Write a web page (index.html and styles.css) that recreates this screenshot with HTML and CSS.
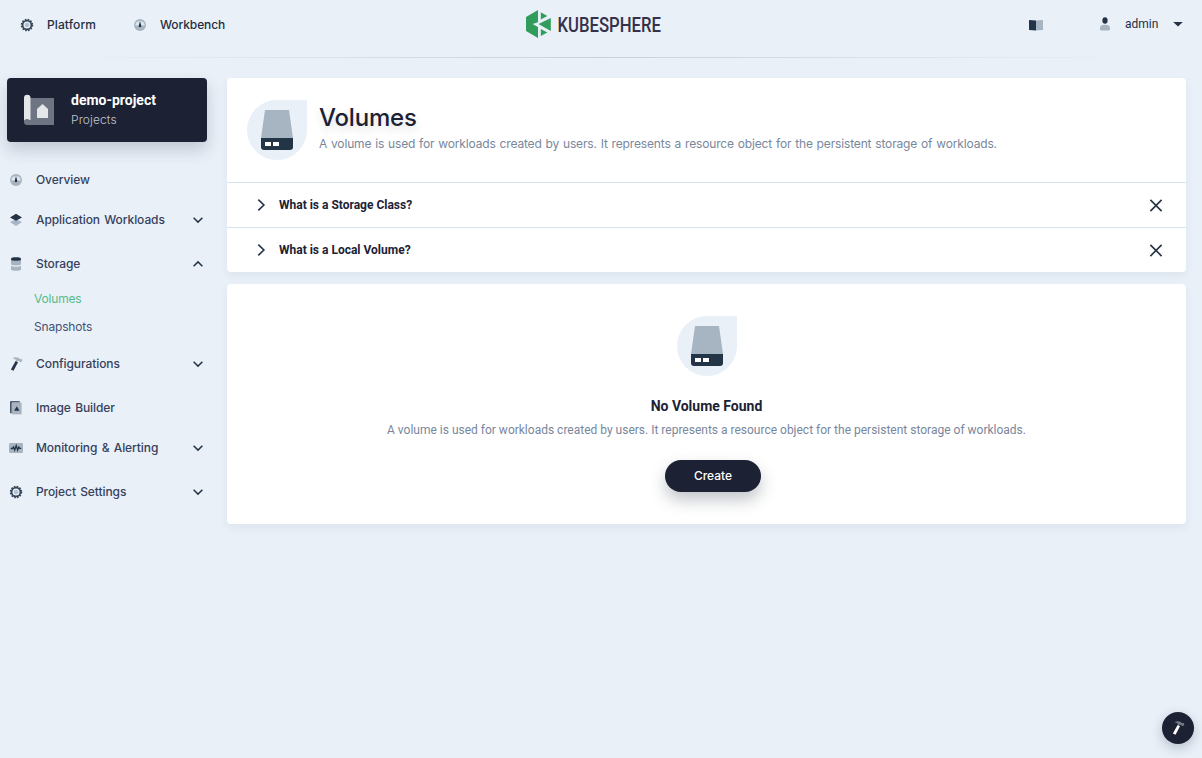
FILE: index.html
```html
<!DOCTYPE html>
<html lang="en">
<head>
<meta charset="utf-8">
<title>Volumes - KubeSphere</title>
<link rel="stylesheet" href="styles.css">
</head>
<body>
<svg class="defs" width="0" height="0">
  <symbol id="gear" viewBox="0 0 16 16"><circle cx="8" cy="8" r="4.400" fill="none" stroke="#324558" stroke-width="1.700"/><circle cx="8" cy="8" r="5.500" fill="none" stroke="#324558" stroke-width="1.500" stroke-dasharray="1.640 1.240"/><circle cx="8" cy="8" r="2.300" fill="#b6c2cd"/></symbol>
  <symbol id="gauge" viewBox="0 0 16 16"><circle cx="8" cy="8" r="6" fill="#a7b4c1"/><path d="M3.300 8.600a4.700 4.700 0 0 1 9.400 0z" fill="#dde5ed"/><path d="M8 4l1.200 4.400a1.300 1.300 0 1 1-2.400 0z" fill="#243447"/></symbol>
  <symbol id="layers" viewBox="0 0 16 16"><path d="M8 7.300l6 2.800-6 3.900-6-3.900z" fill="#a7b4c1"/><path d="M8 1.800l6 3.700-6 3.300-6-3.300z" fill="#243447"/></symbol>
  <symbol id="database" viewBox="0 0 16 16"><path d="M3 4v4.200c0 1.600 10 1.600 10 0V4z" fill="#a7b4c1"/><path d="M3 9.800v3.600c0 1.800 10 1.800 10 0V9.800c-2 1.300-8 1.300-10 0z" fill="#a7b4c1"/><path d="M3 2.400C3 .800 13 .800 13 2.400v1.300c0 1.300-10 1.300-10 0z" fill="#243447"/></symbol>
  <symbol id="hammer" viewBox="0 0 16 16"><path class="head" d="M4.300 2.300C7.500.600 10.600 1.400 12 3.200l2-.300.300 2.400-2 1-1.400-1.500-2.400.600-1.500-2.300z"/><path class="shaft" d="M7.600 5.100l2.400 1.100-4.500 8.500-2.600-1.300z"/></symbol>
  <symbol id="image" viewBox="0 0 16 16"><path d="M2.200 13.200V1.200h9.600v1.300H3.600v10.700z" fill="#243447"/><path d="M4 2.600h9.600v11.800H4z" fill="#a7b4c1"/><path d="M8.800 6.200l2.700 4.500H6.100z" fill="#243447"/></symbol>
  <symbol id="monitor" viewBox="0 0 16 16"><rect x="1" y="3" width="14" height="10" rx="1.200" fill="#a7b4c1"/><path d="M2.700 8.500h1.800l1-1.500 1.200 3 1.500-4.500 1.400 4.500L10.800 7l.900 1.300h1.500" fill="none" stroke="#243447" stroke-width="1.300"/></symbol>
  <symbol id="down" viewBox="0 0 16 16"><path d="M3.600 5.700L8 10.100l4.400-4.400" fill="none" stroke="#243447" stroke-width="1.500"/></symbol>
  <symbol id="up" viewBox="0 0 16 16"><path d="M3.600 10.300L8 5.900l4.400 4.400" fill="none" stroke="#243447" stroke-width="1.500"/></symbol>
  <symbol id="right" viewBox="0 0 16 16"><path d="M5.300 2.600L10.900 8l-5.600 5.400" fill="none" stroke="#243447" stroke-width="1.600"/></symbol>
  <symbol id="close" viewBox="0 0 16 16"><path d="M2.400 2.900l11.200 11.200M13.600 2.900L2.400 14.100" stroke="#243447" stroke-width="1.600"/></symbol>
  <symbol id="drive" viewBox="0 0 40 40"><path d="M8 0h24l4 28H4z" fill="#a7b4c1"/><path d="M4 28h32v9a3 3 0 0 1-3 3H7a3 3 0 0 1-3-3z" fill="#243447"/><path d="M8 32h6v4H8zM16 32h6v4h-6z" fill="#fff"/></symbol>
</svg>

<header class="topbar">
  <nav class="topbar-nav">
    <a class="top-link platform"><svg class="icon"><use href="#gear"/></svg><span>Platform</span></a>
    <a class="top-link workbench"><svg class="icon"><use href="#gauge"/></svg><span>Workbench</span></a>
  </nav>
  <svg class="logo" viewBox="0 0 136 30">
    <g fill="#329c5c"><path d="M12 1v12.200L6.600 15l5.400 3.100V29L0 22V8z"/><path d="M14.800 3.200l6.500 3.700-6.500 3.500z"/><path d="M24.800 9v13L12.500 15z"/><path d="M14.800 20l6.500 3.400-6.500 3.600z"/></g>
    <text class="wordmark" x="31.500" y="22.700" textLength="103.500" lengthAdjust="spacingAndGlyphs">KUBESPHERE</text>
  </svg>
  <div class="topbar-user">
    <svg class="icon book" viewBox="0 0 16 16"><path d="M1 4l7 .600v9.800L1 14z" fill="#243447"/><path d="M8 4.600L15 4v10l-7 .400z" fill="#a7b4c1"/></svg>
    <svg class="icon person" viewBox="0 0 16 16"><path d="M3 14v-2.300c0-2 1.600-3 5-3s5 1 5 3V14c-1 .800-9 .800-10 0z" fill="#a7b4c1"/><ellipse cx="8" cy="4.500" rx="2.600" ry="3.200" fill="#243447"/></svg>
    <span class="user-name">admin</span>
    <svg class="icon" viewBox="0 0 16 16"><path d="M3.200 6h9.600L8 10.600z" fill="#243447"/></svg>
  </div>
</header>

<div class="layout">
  <aside class="sidebar">
    <div class="project">
      <svg class="project-icon" viewBox="0 0 32 32"><path d="M6 4h25v27H4V10z" fill="#6e7481"/><path d="M1 27V4a3.200 3.200 0 0 1 6.500 0v22H4a3 3 0 0 0-3 1z" fill="#e4e6e9"/><circle cx="4" cy="28" r="3" fill="#6e7481"/><path d="M19.500 10l5.500 5v9H14v-9z" fill="#e4e6e9"/></svg>
      <div class="project-text"><strong>demo-project</strong><span>Projects</span></div>
    </div>
    <nav class="menu">
      <a class="item overview"><svg class="icon"><use href="#gauge"/></svg><span>Overview</span></a>
      <a class="item group apps"><svg class="icon"><use href="#layers"/></svg><span>Application Workloads</span><svg class="icon arrow"><use href="#down"/></svg></a>
      <a class="item storage"><svg class="icon"><use href="#database"/></svg><span>Storage</span><svg class="icon arrow"><use href="#up"/></svg></a>
      <div class="submenu"><a class="active">Volumes</a><a>Snapshots</a></div>
      <a class="item group config"><svg class="icon"><use href="#hammer"/></svg><span>Configurations</span><svg class="icon arrow"><use href="#down"/></svg></a>
      <a class="item builder"><svg class="icon"><use href="#image"/></svg><span>Image Builder</span></a>
      <a class="item group monitoring"><svg class="icon"><use href="#monitor"/></svg><span>Monitoring &amp; Alerting</span><svg class="icon arrow"><use href="#down"/></svg></a>
      <a class="item settings"><svg class="icon"><use href="#gear"/></svg><span>Project Settings</span><svg class="icon arrow"><use href="#down"/></svg></a>
    </nav>
  </aside>

  <main class="content">
    <section class="card banner">
      <div class="banner-head">
        <div class="drop"><svg><use href="#drive"/></svg></div>
        <div class="banner-text"><h1>Volumes</h1><p>A volume is used for workloads created by users. It represents a resource object for the persistent storage of workloads.</p></div>
      </div>
      <div class="tip"><svg class="icon"><use href="#right"/></svg><span>What is a Storage Class?</span><svg class="icon arrow"><use href="#close"/></svg></div>
      <div class="tip"><svg class="icon"><use href="#right"/></svg><span>What is a Local Volume?</span><svg class="icon arrow"><use href="#close"/></svg></div>
    </section>
    <section class="card empty">
      <div class="drop"><svg><use href="#drive"/></svg></div>
      <h2>No Volume Found</h2>
      <p>A volume is used for workloads created by users. It represents a resource object for the persistent storage of workloads.</p>
      <button class="create">Create</button>
    </section>
  </main>
</div>
<button class="toolbox"><svg class="icon"><use href="#hammer"/></svg></button>
</body>
</html>
```

FILE: styles.css
```css
* { box-sizing: border-box; }
body { margin: 0; height: 758px; overflow: hidden; background: #e9f0f8; color: #242e42; font: 400 12px/20px Roboto, "Liberation Sans", sans-serif; }
h1, h2, p { margin: 0; }
.defs { position: absolute; }
.icon { width: 16px; height: 16px; flex: none; display: block; }
.head { fill: var(--head, #a7b4c1); }
.shaft { fill: var(--shaft, #243447); }

.topbar { height: 58px; display: grid; grid-template-columns: 1fr 136px 1fr; align-items: start; border-bottom: 1px solid; border-image: linear-gradient(90deg, rgba(193,204,216,0) 5%, #c8d2dd 50%, rgba(193,204,216,0) 95%) 1; }
.topbar-nav { display: flex; gap: 36px; padding: 15px 0 0 19px; }
.top-link { display: flex; align-items: center; gap: 12px; font: 500 12px/20px Inter, sans-serif; white-space: nowrap; }
.platform { letter-spacing: .1px; }
.workbench { letter-spacing: -.1px; }
.logo { width: 136px; height: 30px; margin: 9px 0 0 -7px; overflow: visible; }
.wordmark { font: 500 21px Roboto, sans-serif; fill: #36304a; }
.topbar-user { display: flex; align-items: center; justify-content: flex-end; padding: 14px 16px 0 0; }
.person { margin: 0 12px 0 53px; }
.user-name { width: 33px; margin-right: 12px; white-space: nowrap; }

.layout { display: flex; gap: 20px; padding: 20px 16px 0 7px; }
.sidebar { width: 200px; flex: none; }
.project { height: 64px; display: flex; align-items: center; gap: 16px; padding: 0 16px; border-radius: 4px; background: #1c2133; box-shadow: 0 8px 16px rgba(36,46,66,.2); }
.project-icon { width: 32px; height: 32px; }
.project-text { display: flex; flex-direction: column; color: #c1c4cb; }
.project-text strong { color: #fff; font-weight: 700; font-size: 14px; line-height: 18px; }
.project-text span { font-family: Inter, sans-serif; font-weight: 300; line-height: 20px; letter-spacing: .1px; padding-top: 1px; margin-bottom: -1px; }
.menu { padding-top: 18px; }
.item { height: 40px; display: flex; align-items: center; gap: 12px; padding: 0 1px; color: #36415c; font: 500 12px/20px Inter, sans-serif; letter-spacing: -.08px; word-spacing: 1.2px; white-space: nowrap; }
.group { margin-bottom: 4px; }
.arrow { margin-left: auto; }
.submenu { display: flex; flex-direction: column; padding: 1px 0 3px 27px; color: #465070; font: 400 12px/28px Inter, sans-serif; letter-spacing: -.17px; }
.submenu .active { color: #55bc8a; }

.content { flex: 1; display: flex; flex-direction: column; gap: 12px; }
.card { border-radius: 4px; background: #fff; box-shadow: 0 4px 8px rgba(36,46,66,.06); }
.banner-head { height: 104px; display: flex; gap: 12px; padding: 22px 20px; }
.drop { width: 60px; height: 60px; flex: none; display: grid; place-items: center; border-radius: 50% 0 50% 50%; background: #e9f0f8; }
.drop svg { width: 40px; height: 40px; }
.banner-text h1 { margin-top: 2px; font: 500 24px/32px Inter, sans-serif; letter-spacing: -.2px; text-shadow: 0 4px 8px rgba(36,46,66,.15); color: #1c2133; }
.banner-text p { color: #79879c; white-space: nowrap; font-family: Inter, sans-serif; letter-spacing: -.15px; word-spacing: .65px; }
.tip { height: 45px; display: flex; align-items: center; gap: 10px; padding: 0 22px 0 26px; border-top: 1px solid #d8e2eb; color: #1c2133; font-weight: 700; }
.empty { height: 240px; display: flex; flex-direction: column; align-items: center; padding-top: 32px; }
.empty h2 { margin: 20px 0 4px; font-size: 14px; line-height: 20px; font-weight: 700; color: #1c2133; }
.empty p { color: #79879c; white-space: nowrap; }
.create { width: 96px; height: 32px; margin: 20px 0 0 13px; padding: 0; border: 0; border-radius: 16px; background: #1c2133; color: #fff; font: 500 12px/20px Inter, sans-serif; box-shadow: 0 8px 16px rgba(36,46,66,.28); }
.toolbox { position: fixed; right: 8px; bottom: 14px; width: 32px; height: 32px; display: grid; place-items: center; padding: 0; border: 0; border-radius: 50%; background: #1c2133; box-shadow: 0 4px 12px rgba(36,46,66,.25); }
.toolbox .icon { --head: #747985; --shaft: #fff; }
```
